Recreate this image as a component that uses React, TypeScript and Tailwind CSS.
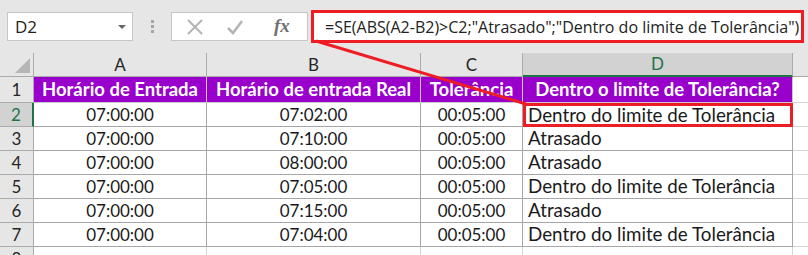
import { Fragment } from "react";

const rows = [
  ["07:00:00", "07:02:00", "00:05:00", "Dentro do limite de Tolerância"],
  ["07:00:00", "07:10:00", "00:05:00", "Atrasado"],
  ["07:00:00", "08:00:00", "00:05:00", "Atrasado"],
  ["07:00:00", "07:05:00", "00:05:00", "Dentro do limite de Tolerância"],
  ["07:00:00", "07:15:00", "00:05:00", "Atrasado"],
  ["07:00:00", "07:04:00", "00:05:00", "Dentro do limite de Tolerância"],
];

const cell = "border-r border-b border-[#a6a6a6] flex items-center";
const head = "border-r border-b border-[#ababab] bg-[#e6e6e6] flex items-center justify-center text-[#262626]";

export default function App() {
  return (
    <div className="relative w-[808px] h-[255px] overflow-hidden bg-white text-[17px] text-[#1a1a1a]" style={{ fontFamily: "Lato, 'Liberation Sans', sans-serif" }}>
      {/* formula bar */}
      <div className="h-[53px] bg-[#e6e6e6] flex items-start pt-[12px] pl-[7px]">
        <div className="w-[126px] h-[29px] bg-white border border-[#c6c6c6] flex items-center pl-[7px] pr-[6px] justify-between">
          <span className="text-[17px] text-[#222]" style={{ fontFamily: "'Open Sans', sans-serif" }}>D2</span>
          <span className="w-0 h-0 border-l-[4px] border-r-[4px] border-t-[4px] border-l-transparent border-r-transparent border-t-[#666]" />
        </div>
        <div className="w-[38px] h-[29px] flex flex-col items-center justify-center gap-[2px]">
          <span className="w-[3px] h-[3px] bg-[#a6a6a6]" />
          <span className="w-[3px] h-[3px] bg-[#a6a6a6]" />
          <span className="w-[3px] h-[3px] bg-[#a6a6a6]" />
        </div>
        <div className="w-[137px] h-[29px] bg-white border border-[#c6c6c6] flex items-center pl-[14px] gap-[22px]">
          <svg width="18" height="18" viewBox="0 0 18 18"><path d="M2 2 L16 16 M16 2 L2 16" stroke="#b4b4b4" strokeWidth="2" fill="none" /></svg>
          <svg width="18" height="18" viewBox="0 0 18 18"><path d="M2 10 L7 15 L16 3" stroke="#b4b4b4" strokeWidth="2.5" fill="none" /></svg>
          <span className="ml-[8px] italic text-[#707070] text-[19px] font-bold" style={{ fontFamily: "'Liberation Serif', serif" }}>fx</span>
        </div>
        <div className="ml-[3px] mt-[-2px] w-[493px] h-[33px] bg-white border-[3px] border-[#ee1c25] flex items-center pl-[11px] text-[#222] whitespace-nowrap" style={{ fontFamily: "'Open Sans', sans-serif", fontSize: "16px" }}>
          =SE(ABS(A2-B2)&gt;C2;"Atrasado";"Dentro do limite de Tolerância")
        </div>
      </div>

      {/* sheet */}
      <div className="grid grid-cols-[34px_173px_214px_102px_270px_15px] grid-rows-[24px_26px_24px_24px_24px_24px_24px_24px_24px]">
        <div className="border-r border-b border-[#ababab] bg-[#e6e6e6] relative">
          <svg className="absolute right-[3px] bottom-[3px]" width="15" height="15" viewBox="0 0 15 15"><path d="M15 0 L15 15 L0 15 Z" fill="#b6b6b6" /></svg>
        </div>
        <div className={head}>A</div>
        <div className={head}>B</div>
        <div className={head}>C</div>
        <div className="border-r border-b-2 border-r-[#ababab] border-b-[#217346] bg-[#d2d2d2] flex items-center justify-center text-[#217346]">D</div>
        <div className="border-b border-[#ababab] bg-[#e6e6e6]" />

        {/* row 1 */}
        <div className={head}>1</div>
        {["Horário de Entrada", "Horário de entrada Real", "Tolerância", "Dentro o limite de Tolerância?"].map((t) => (
          <div key={t} className="border-r border-b border-[#c8c8c8] bg-[#9900cc] text-white font-bold flex items-center justify-center whitespace-nowrap overflow-hidden text-[18.5px]">{t}</div>
        ))}
        <div className="border-b border-[#d4d4d4]" />

        {rows.map((r, i) => (
          <Fragment key={i}>
            {i === 0 ? (
              <div className="border-r-2 border-b border-r-[#217346] border-b-[#ababab] bg-[#d2d2d2] flex items-center justify-center text-[#217346]">2</div>
            ) : (
              <div className={head}>{i + 2}</div>
            )}
            <div className={`${cell} justify-center`}>{r[0]}</div>
            <div className={`${cell} justify-center`}>{r[1]}</div>
            <div className={`${cell} justify-center`}>{r[2]}</div>
            {i === 0 ? (
              <div className="border-[3px] border-[#ee1c25] flex items-center pl-[2px] whitespace-nowrap text-[18.8px]">{r[3]}</div>
            ) : (
              <div className={`${cell} pl-[5px] whitespace-nowrap text-[18.8px]`}>{r[3]}</div>
            )}
            <div className="border-b border-[#d4d4d4]" />
          </Fragment>
        ))}

        <div className={head}>8</div>
        <div className="border-r border-[#d4d4d4]" />
        <div className="border-r border-[#d4d4d4]" />
        <div className="border-r border-[#d4d4d4]" />
        <div className="border-r border-[#d4d4d4]" />
        <div />
      </div>

      {/* pointer line */}
      <svg className="absolute left-0 top-0 pointer-events-none" width="808" height="255">
        <line x1="316" y1="41" x2="526" y2="104" stroke="#ee1c25" strokeWidth="3" />
      </svg>
    </div>
  );
}
